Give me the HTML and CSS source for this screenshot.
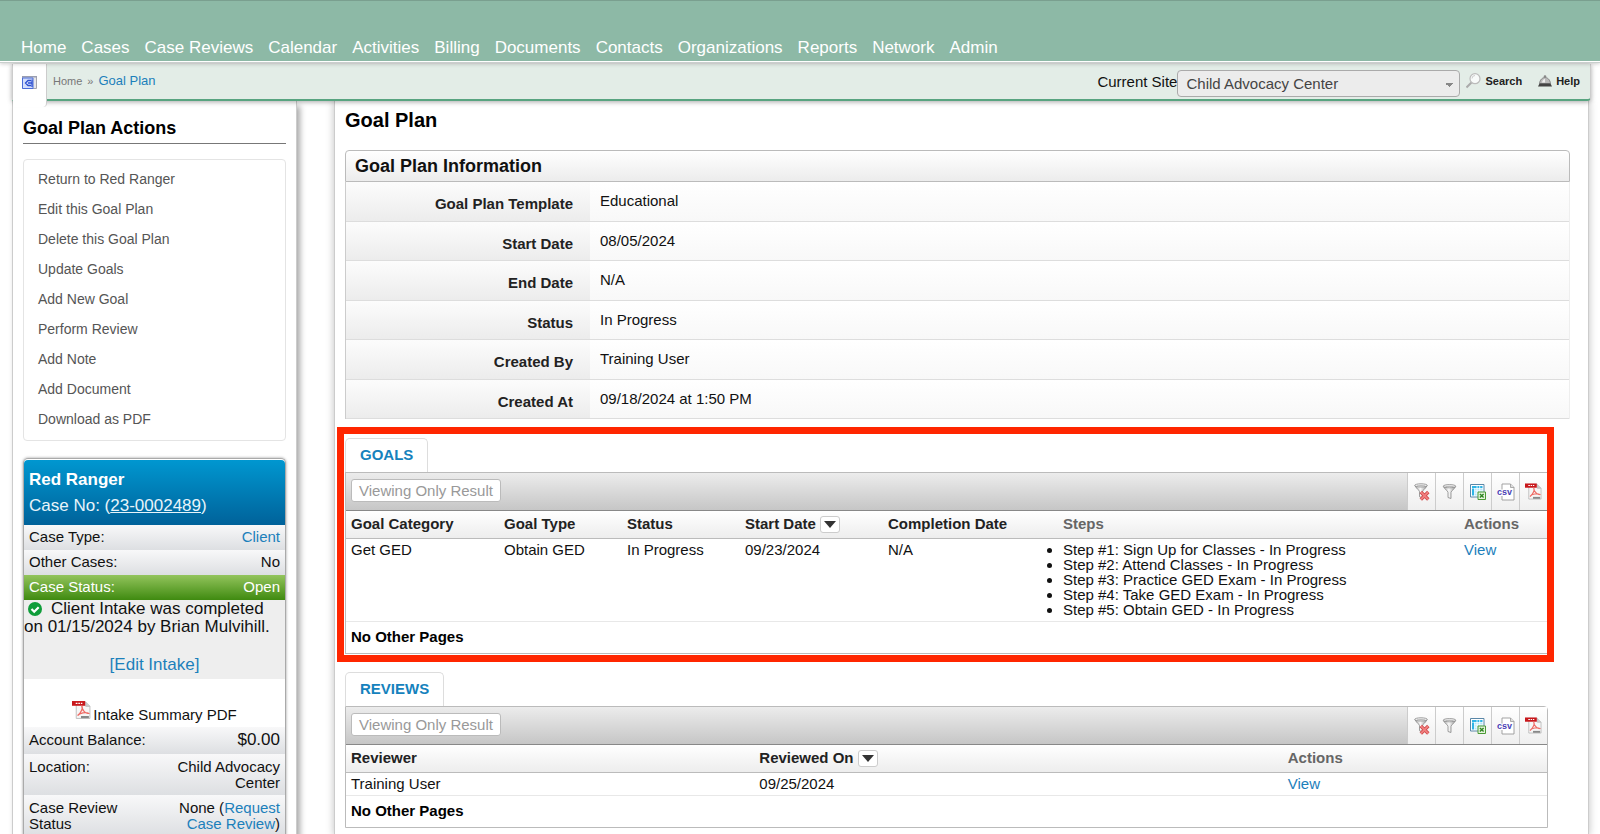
FILE: index.html
```html
<!DOCTYPE html>
<html lang="en">

<head>
    <meta charset="UTF-8">
    <meta name="viewport" content="width=device-width, initial-scale=1.0">
    <title>Goal Plan</title>
    <link rel="stylesheet" href="styles.css">
</head>

<body>
    <!-- Shared icons -->
    <svg class="icon-defs" aria-hidden="true">
        <defs>
            <linearGradient id="metal" x1="0" x2="1" y1="0" y2="0">
                <stop offset="0" stop-color="#aaa" />
                <stop offset="0.45" stop-color="#fafafa" />
                <stop offset="1" stop-color="#999" />
            </linearGradient>
        </defs>
        <symbol id="icon-filter" viewBox="0 0 15 15">
            <path d="M1.500 2.500C2 5 6 6.500 6 8.500v5l3 1V8.500C9 6.500 13 5 13.500 2.500z" fill="url(#metal)" stroke="#888" stroke-width=".8" />
            <ellipse cx="7.500" cy="2.200" rx="6.300" ry="1.600" fill="#f4f4f4" stroke="#888" stroke-width=".8" />
            <ellipse cx="7.500" cy="2.500" rx="4.500" ry=".7" fill="#bbb" />
        </symbol>
        <symbol id="icon-filter-off" viewBox="0 0 16 18">
            <path d="M1 2.700C1.500 5.200 5.500 6.700 5.500 8.700v5l3 1V8.700c0-2 4-3.500 4.500-6z" fill="url(#metal)" stroke="#888" stroke-width=".8" />
            <ellipse cx="7" cy="2.400" rx="6.300" ry="1.600" fill="#f4f4f4" stroke="#888" stroke-width=".8" />
            <ellipse cx="7" cy="2.700" rx="4.500" ry=".7" fill="#bbb" />
            <path d="m6.800 9 7.500 7.500m0-7.500-7.500 7.500" stroke="#cf4b4b" stroke-width="3.400" />
            <path d="m7 9.200 7.100 7.100m0-7.100L7 16.300" stroke="#f28080" stroke-width="1.800" />
        </symbol>
        <symbol id="icon-excel" viewBox="0 0 16 16">
            <path d="M.5.5h13.500v12.500H.5z" fill="#fff" stroke="#5a87a8" />
            <path d="M2 2h10.500v2H2zM2 4.500h2v7H2z" fill="#2fb4e6" />
            <path d="M4.500 4.500h8v7h-8z" fill="#b5e6f8" />
            <path d="M4.500 6.800h8M4.500 9.100h8M7 2v9.500M9.700 2v9.500" stroke="#fff" stroke-width=".8" />
            <path d="M8 8h7.500v7.500H8z" fill="#e5f3dd" stroke="#4a9a35" />
            <path d="m9.900 9.900 3.700 3.700m0-3.700-3.700 3.700" stroke="#2e8420" stroke-width="1.400" />
        </symbol>
        <symbol id="icon-pdf" viewBox="0 0 18 18">
            <path d="M4 1.500h9l4 4V17H4z" fill="#f6f6f6" stroke="#b5b5b5" stroke-width=".8" />
            <path d="M13 1.500v4h4" fill="#ccc" stroke="#b5b5b5" stroke-width=".8" />
            <path d="M0 .5h12.500v4.500H0z" fill="#c8171b" />
            <path d="M3.500 2.700h1.700M6 2.700h1.500M8.400 2.700h1.400" stroke="#fff" stroke-width="1.200" />
            <path d="M9.300 5.500c1.200 1-.3 6-4 8.800 1.800-2.600 8-3.600 10.300-2.100-2.400.6-6.600-3.500-6.300-6.700z" fill="none" stroke="#ee6a64" stroke-width="1.200" />
            <path d="M8.500 15.700H16" stroke="#888" stroke-width="2" />
        </symbol>
    </svg>

    <header class="site-header">
        <nav class="main-nav">
            <a href="#">Home</a>
            <a href="#">Cases</a>
            <a href="#">Case Reviews</a>
            <a href="#">Calendar</a>
            <a href="#">Activities</a>
            <a href="#">Billing</a>
            <a href="#">Documents</a>
            <a href="#">Contacts</a>
            <a href="#">Organizations</a>
            <a href="#">Reports</a>
            <a href="#">Network</a>
            <a href="#">Admin</a>
        </nav>
    </header>

    <div class="page">
        <div class="topbar">
            <button class="collapse-btn" type="button" aria-label="Collapse sidebar">
                <svg width="15" height="13" viewBox="0 0 15 13">
                    <path d="M.5.5h14v12H.5z" fill="#e6e6ea" stroke="#a5a5ad" />
                    <path d="M0 0h15v1.500H0z" fill="#9a9eb0" />
                    <path d="M.5 2H11v10.500H.5z" fill="#d3defc" stroke="#4a6cd8" />
                    <path d="M9 4.500H6L3.500 7 6 9.500h3M6 7h4M10 3.500v7.500" fill="none" stroke="#2c4fd0" stroke-width="1.300" />
                </svg>
            </button>
            <div class="breadcrumb">
                <a href="#" class="crumb-home">Home</a>
                <span class="crumb-sep">»</span>
                <a href="#" class="crumb-current">Goal Plan</a>
            </div>
            <div class="site-tools">
                <label for="site">Current Site</label>
                <select id="site">
                    <option>Child Advocacy Center</option>
                </select>
                <a href="#" class="tool-link tool-search">
                    <svg width="15" height="16" viewBox="0 0 15 16">
                        <path d="m5.500 9.500-5 5" stroke="#aaa" stroke-width="2" />
                        <circle cx="9" cy="5.700" r="5" fill="#f8fbfa" stroke="#bbb" stroke-width="1.200" />
                        <path d="M6 5.500a3 3 0 0 1 3-3" fill="none" stroke="#ccc" />
                    </svg>
                    Search
                </a>
                <a href="#" class="tool-link tool-help">
                    <svg width="14" height="12" viewBox="0 0 14 12">
                        <path d="M1.500 8.500C2 4.500 4.500 2.500 7 2.500s5 2 5.500 6z" fill="#bbb" stroke="#777" stroke-width=".8" />
                        <path d="M4 7.500c.3-2 1.500-3.500 3-3.800v3.800z" fill="#eee" />
                        <circle cx="7" cy="1.500" r="1.300" fill="#888" />
                        <path d="M1.500 8.500h11L14 11.500H0z" fill="#444" />
                    </svg>
                    Help
                </a>
            </div>
        </div>

        <div class="columns">
            <aside class="sidebar">
                <h2>Goal Plan Actions</h2>
                <ul class="actions">
                    <li><a href="#">Return to Red Ranger</a></li>
                    <li><a href="#">Edit this Goal Plan</a></li>
                    <li><a href="#">Delete this Goal Plan</a></li>
                    <li><a href="#">Update Goals</a></li>
                    <li><a href="#">Add New Goal</a></li>
                    <li><a href="#">Perform Review</a></li>
                    <li><a href="#">Add Note</a></li>
                    <li><a href="#">Add Document</a></li>
                    <li><a href="#">Download as PDF</a></li>
                </ul>

                <!-- Case summary -->
                <section class="case-card">
                    <div class="case-head">
                        <h3>Red Ranger</h3>
                        <p>Case No: (<a href="#">23-0002489</a>)</p>
                    </div>
                    <div class="case-row"><span>Case Type:</span><a href="#">Client</a></div>
                    <div class="case-row"><span>Other Cases:</span><span>No</span></div>
                    <div class="case-row open"><span>Case Status:</span><span>Open</span></div>
                    <div class="intake">
                        <p><svg class="check" width="14" height="14" viewBox="0 0 14 14"><circle cx="7" cy="7" r="7" fill="#0f9d3a" /><path d="m3.500 7 2.700 2.700 4.500-4.500" fill="none" stroke="#fff" stroke-width="2.200" /></svg>Client Intake was completed on 01/15/2024 by Brian Mulvihill.</p>
                        <a href="#">[Edit Intake]</a>
                    </div>
                    <div class="intake-pdf">
                        <svg width="19" height="20"><use href="#icon-pdf" /></svg><span>Intake Summary PDF</span>
                    </div>
                    <div class="case-row balance"><span>Account Balance:</span><span class="amount">$0.00</span></div>
                    <div class="case-row tall"><span>Location:</span><span class="case-value">Child Advocacy Center</span></div>
                    <div class="case-row tall"><span class="case-label">Case Review Status</span><span class="case-value">None (<a href="#">Request Case Review</a>)</span></div>
                </section>
            </aside>

            <main class="content">
                <h1>Goal Plan</h1>

                <section class="info">
                    <h2>Goal Plan Information</h2>
                    <table class="info-table">
                        <tr><th>Goal Plan Template</th><td>Educational</td></tr>
                        <tr><th>Start Date</th><td>08/05/2024</td></tr>
                        <tr><th>End Date</th><td>N/A</td></tr>
                        <tr><th>Status</th><td>In Progress</td></tr>
                        <tr><th>Created By</th><td>Training User</td></tr>
                        <tr><th>Created At</th><td>09/18/2024 at 1:50 PM</td></tr>
                    </table>
                </section>

                <section class="panel highlight">
                    <a href="#" class="tab">GOALS</a>
                    <div class="grid">
                        <div class="toolbar">
                            <button class="viewing" type="button" disabled>Viewing Only Result</button>
                            <div class="tools">
                                <button type="button" aria-label="Clear filters"><svg width="16" height="18"><use href="#icon-filter-off" /></svg></button>
                                <button type="button" aria-label="Filter"><svg width="15" height="15"><use href="#icon-filter" /></svg></button>
                                <button type="button" aria-label="Export to Excel"><svg width="16" height="16"><use href="#icon-excel" /></svg></button>
                                <button type="button" aria-label="Export to CSV">
                                    <svg width="18" height="18" viewBox="0 0 18 18">
                                        <path d="M5 1h8.500L17 4.500V17H5z" fill="#fff" stroke="#999" stroke-width=".9" />
                                        <path d="M13.500 1v3.500H17" fill="#ddd" stroke="#999" stroke-width=".8" />
                                        <path d="M1 6.500h14V13H1z" fill="#fff" />
                                        <text x="0" y="12" class="csv-text">csv</text>
                                    </svg>
                                </button>
                                <button type="button" aria-label="Export to PDF"><svg width="17" height="17"><use href="#icon-pdf" /></svg></button>
                            </div>
                        </div>
                        <table class="data goals">
                            <colgroup>
                                <col class="col-category">
                                <col class="col-type">
                                <col class="col-status">
                                <col class="col-start">
                                <col class="col-completion">
                                <col>
                                <col class="col-actions">
                            </colgroup>
                            <thead>
                                <tr>
                                    <th>Goal Category</th>
                                    <th>Goal Type</th>
                                    <th>Status</th>
                                    <th><div class="sorted">Start Date <button class="sort" type="button" aria-label="Sort"></button></div></th>
                                    <th>Completion Date</th>
                                    <th class="plain">Steps</th>
                                    <th class="plain">Actions</th>
                                </tr>
                            </thead>
                            <tbody>
                                <tr>
                                    <td>Get GED</td>
                                    <td>Obtain GED</td>
                                    <td>In Progress</td>
                                    <td>09/23/2024</td>
                                    <td>N/A</td>
                                    <td>
                                        <ul class="steps">
                                            <li>Step #1: Sign Up for Classes - In Progress</li>
                                            <li>Step #2: Attend Classes - In Progress</li>
                                            <li>Step #3: Practice GED Exam - In Progress</li>
                                            <li>Step #4: Take GED Exam - In Progress</li>
                                            <li>Step #5: Obtain GED - In Progress</li>
                                        </ul>
                                    </td>
                                    <td><a href="#">View</a></td>
                                </tr>
                            </tbody>
                        </table>
                        <div class="pager">No Other Pages</div>
                    </div>
                </section>

                <section class="panel">
                    <a href="#" class="tab">REVIEWS</a>
                    <div class="grid">
                        <div class="toolbar">
                            <button class="viewing" type="button" disabled>Viewing Only Result</button>
                            <div class="tools">
                                <button type="button" aria-label="Clear filters"><svg width="16" height="18"><use href="#icon-filter-off" /></svg></button>
                                <button type="button" aria-label="Filter"><svg width="15" height="15"><use href="#icon-filter" /></svg></button>
                                <button type="button" aria-label="Export to Excel"><svg width="16" height="16"><use href="#icon-excel" /></svg></button>
                                <button type="button" aria-label="Export to CSV">
                                    <svg width="18" height="18" viewBox="0 0 18 18">
                                        <path d="M5 1h8.500L17 4.500V17H5z" fill="#fff" stroke="#999" stroke-width=".9" />
                                        <path d="M13.500 1v3.500H17" fill="#ddd" stroke="#999" stroke-width=".8" />
                                        <path d="M1 6.500h14V13H1z" fill="#fff" />
                                        <text x="0" y="12" class="csv-text">csv</text>
                                    </svg>
                                </button>
                                <button type="button" aria-label="Export to PDF"><svg width="17" height="17"><use href="#icon-pdf" /></svg></button>
                            </div>
                        </div>
                        <table class="data reviews">
                            <colgroup>
                                <col class="col-reviewer">
                                <col>
                                <col class="col-review-actions">
                            </colgroup>
                            <thead>
                                <tr>
                                    <th>Reviewer</th>
                                    <th><div class="sorted">Reviewed On <button class="sort" type="button" aria-label="Sort"></button></div></th>
                                    <th class="plain">Actions</th>
                                </tr>
                            </thead>
                            <tbody>
                                <tr>
                                    <td>Training User</td>
                                    <td>09/25/2024</td>
                                    <td><a href="#">View</a></td>
                                </tr>
                            </tbody>
                        </table>
                        <div class="pager">No Other Pages</div>
                    </div>
                </section>
            </main>
        </div>
    </div>
</body>

</html>
```
FILE: styles.css
```css
* {
    box-sizing: border-box;
}

body {
    margin: 0;
    font-family: "Liberation Sans", Arial, Helvetica, sans-serif;
    font-size: 15px;
    line-height: 16px;
    color: #111;
    background: #fff;
    display: flex;
    flex-direction: column;
    min-height: 100vh;
}

h1,
h2,
h3,
p,
ul {
    margin: 0;
    padding: 0;
}

a {
    color: #1c80bb;
    text-decoration: none;
}

button {
    font-family: inherit;
    padding: 0;
    cursor: pointer;
}

.icon-defs {
    position: absolute;
    width: 0;
    height: 0;
}

.csv-text {
    font-size: 9px;
    font-weight: bold;
    fill: #4a3fb5;
}

/* Header */
.site-header {
    background: #8db9a6;
    border-top: 1px solid #7a9f8f;
    padding: 36px 21px 3px;
    box-shadow: 0 1px 0 #fff, 0 2px 0 #c9cfcd, 0 3px 4px rgba(0, 0, 0, 0.2);
    position: relative;
    z-index: 2;
}

.main-nav {
    display: flex;
    gap: 15px;
    font-size: 17px;
    line-height: 21px;
}

.main-nav a {
    color: #fff;
}

/* Page frame */
.page {
    flex: 1;
    display: flex;
    flex-direction: column;
    margin: 3px 9px 0 12px;
}

.topbar {
    display: flex;
    align-items: flex-start;
    height: 37px;
    background: #e3ede7;
    border-left: 1px solid #ccc;
    border-right: 1px solid #ccc;
    border-bottom: 2px solid #58a480;
    border-bottom-right-radius: 4px;
    box-shadow: 0 1px 5px rgba(0, 0, 0, 0.35);
    position: relative;
    z-index: 1;
}

.collapse-btn {
    width: 34px;
    height: 43px;
    background: #fff;
    border: none;
    border-right: 1px solid #ccc;
    border-bottom-right-radius: 4px;
    padding-bottom: 4px;
}

.breadcrumb {
    display: flex;
    align-items: baseline;
    gap: 5px;
    padding: 9px 0 0 6px;
    font-size: 13px;
}

.crumb-home,
.crumb-sep {
    font-size: 11px;
    color: #777;
}

.site-tools {
    display: flex;
    align-items: flex-start;
    margin-left: auto;
    padding: 6px 10px 0 0;
}

.site-tools label {
    padding-top: 4px;
}

.site-tools select {
    appearance: none;
    width: 283px;
    height: 27px;
    padding: 0 8px;
    font-family: inherit;
    font-size: 15px;
    color: #444;
    background: #ececec conic-gradient(from -45deg at 50% 100%, #888 90deg, transparent 0) no-repeat right 6px top 12px / 8px 4px;
    border: 1px solid #aaa;
    border-radius: 4px;
}

.tool-link {
    display: flex;
    gap: 4px;
    padding-top: 3px;
    font-size: 11px;
    font-weight: bold;
    line-height: 16px;
    color: #222;
}

.tool-search {
    margin-left: 6px;
}

.tool-help {
    margin-left: 16px;
}

.tool-help svg {
    margin-top: 2px;
}

.columns {
    flex: 1;
    display: flex;
    padding-right: 2px;
}

/* Sidebar */
.sidebar {
    flex: none;
    width: 285px;
    display: flex;
    flex-direction: column;
    padding: 17px 10px 0;
    border-left: 1px solid #ccc;
    border-right: 1px solid #ccc;
    box-shadow: 3px 5px 6px rgba(0, 0, 0, 0.35);
}

.sidebar h2 {
    font-size: 18px;
    line-height: 20px;
    color: #000;
    padding-bottom: 5px;
    border-bottom: 1px solid #777;
}

.actions {
    list-style: none;
    margin: 15px 0 17px;
    padding: 4px 14px 6px;
    border: 1px solid #e4e4e4;
    border-radius: 4px;
}

.actions a {
    font-size: 14px;
    line-height: 30px;
    color: #555;
}

.case-card {
    flex: 1;
    border: 1px solid #aaa;
    border-bottom: none;
    border-radius: 5px 5px 0 0;
    padding-top: 1px;
    box-shadow: 0 0 3px rgba(0, 0, 0, 0.4);
    display: flex;
    flex-direction: column;
}

.case-head {
    padding: 10px 5px 8px;
    font-size: 17px;
    color: #e8f4fa;
    background: linear-gradient(#0097d0, #00629a);
    border-radius: 4px 4px 0 0;
}

.case-head h3 {
    font-size: 17px;
    line-height: 20px;
    color: #fff;
}

.case-head p {
    margin-top: 5px;
    line-height: 22px;
}

.case-head a {
    color: #e8f4fa;
    text-decoration: underline;
}

.case-row {
    display: flex;
    justify-content: space-between;
    padding: 4px 5px 5px;
    background: linear-gradient(#f8f8f9, #dddfe2);
}

.case-row.open {
    color: #fff;
    background: linear-gradient(#93c45c, #3f8a10);
}

.case-row.balance {
    padding: 5px 5px 6px;
}

.case-row.tall {
    padding: 5px 5px 4px;
}

.case-row:last-child {
    flex: 1;
}

.case-label {
    width: 110px;
}

.case-value {
    width: 120px;
    text-align: right;
}

.amount {
    font-size: 17px;
}

.intake {
    padding-bottom: 5px;
    font-size: 17px;
    line-height: 18px;
    text-align: center;
    background: #eee;
}

.intake p {
    margin-bottom: 20px;
    text-align: left;
}

.intake .check {
    margin: 0 9px -2px 4px;
}

.intake-pdf {
    display: flex;
    justify-content: center;
    gap: 2px;
    padding: 21px 0 4px;
}

.intake-pdf span {
    padding-top: 7px;
}

/* Main content */
.content {
    flex: 1;
    min-width: 0;
    margin-left: 37px;
    padding: 7px 18px 4px 10px;
    border-left: 1px solid #ccc;
    border-right: 1px solid #ccc;
    box-shadow: 0 0 8px rgba(0, 0, 0, 0.25);
}

.content h1 {
    font-size: 20px;
    line-height: 24px;
    color: #000;
}

.info {
    margin-top: 18px;
}

.info h2 {
    padding: 0 9px;
    font-size: 18px;
    line-height: 30px;
    background: linear-gradient(#fff, #ececec);
    border: 1px solid #bbb;
    border-radius: 4px 4px 0 0;
}

.info-table {
    width: 100%;
    height: 237px;
    border-spacing: 0;
    border-left: 1px solid #ccc;
    border-right: 1px solid #eee;
}

.info-table th,
.info-table td {
    vertical-align: top;
    border-bottom: 1px solid #ddd;
}

.info-table th {
    width: 244px;
    padding: 14px 17px 0 0;
    text-align: right;
    color: #222;
    background: linear-gradient(#fcfcfc, #ececec);
}

.info-table td {
    padding: 11px 10px 0;
    background: linear-gradient(#fff, #f8f8f8);
}

/* Tabbed tables */
.panel {
    margin: 10px 22px 0 0;
}

.panel.highlight {
    margin: 8px 16px 0 -8px;
    padding: 4px 0 1px 1px;
    border: 7px solid #ff2600;
}

.tab {
    display: inline-block;
    vertical-align: top;
    padding: 8px 14px 9px;
    font-weight: bold;
    color: #1582bd;
    border: 1px solid #ddd;
    border-bottom: none;
    border-radius: 5px 5px 0 0;
}

.grid {
    border: 1px solid #bbb;
    border-top-right-radius: 4px;
}

.highlight .grid {
    border-right: none;
    border-top-right-radius: 0;
}

.toolbar {
    display: flex;
    justify-content: space-between;
    height: 38px;
    padding-left: 5px;
    background: linear-gradient(#ececec, #c6c6c6);
    border-bottom: 1px solid #888;
}

.viewing {
    align-self: flex-start;
    height: 23px;
    margin-top: 6px;
    padding: 0 7px;
    font-size: 15px;
    color: #999;
    background: #fff;
    border: 1px solid #bbb;
    border-radius: 3px;
}

.tools {
    display: flex;
}

.tools button {
    display: flex;
    align-items: center;
    justify-content: center;
    width: 28px;
    background: linear-gradient(#fff, #efefef);
    border: none;
    border-left: 1px solid #ccc;
}

.data {
    width: 100%;
    table-layout: fixed;
    border-spacing: 0;
}

.data th {
    padding: 5px 5px 6px;
    text-align: left;
    color: #222;
    background: linear-gradient(#fff, #ededed);
    border-bottom: 1px solid #bbb;
}

.data th.plain {
    color: #666;
}

.data td {
    padding: 3px 5px 4px;
    line-height: 15px;
    vertical-align: top;
    border-bottom: 1px solid #e8e8e8;
}

.sorted {
    display: flex;
    align-items: center;
    gap: 4px;
    height: 16px;
}

.sort {
    width: 20px;
    height: 17px;
    background: #fff;
    border: 1px solid #ccc;
    border-radius: 3px;
    display: flex;
    align-items: center;
    justify-content: center;
}

.sort::before {
    content: "";
    border: 6px solid transparent;
    border-top: 7px solid #333;
    border-bottom: none;
}

.col-category {
    width: 153px;
}

.col-type {
    width: 123px;
}

.col-status {
    width: 118px;
}

.col-start {
    width: 143px;
}

.col-completion {
    width: 175px;
}

.col-actions {
    width: 88px;
}

.col-reviewer {
    width: 34%;
}

.col-review-actions {
    width: 22%;
}

.pager {
    padding: 7px 5px 8px;
    font-weight: bold;
    color: #000;
}
```
